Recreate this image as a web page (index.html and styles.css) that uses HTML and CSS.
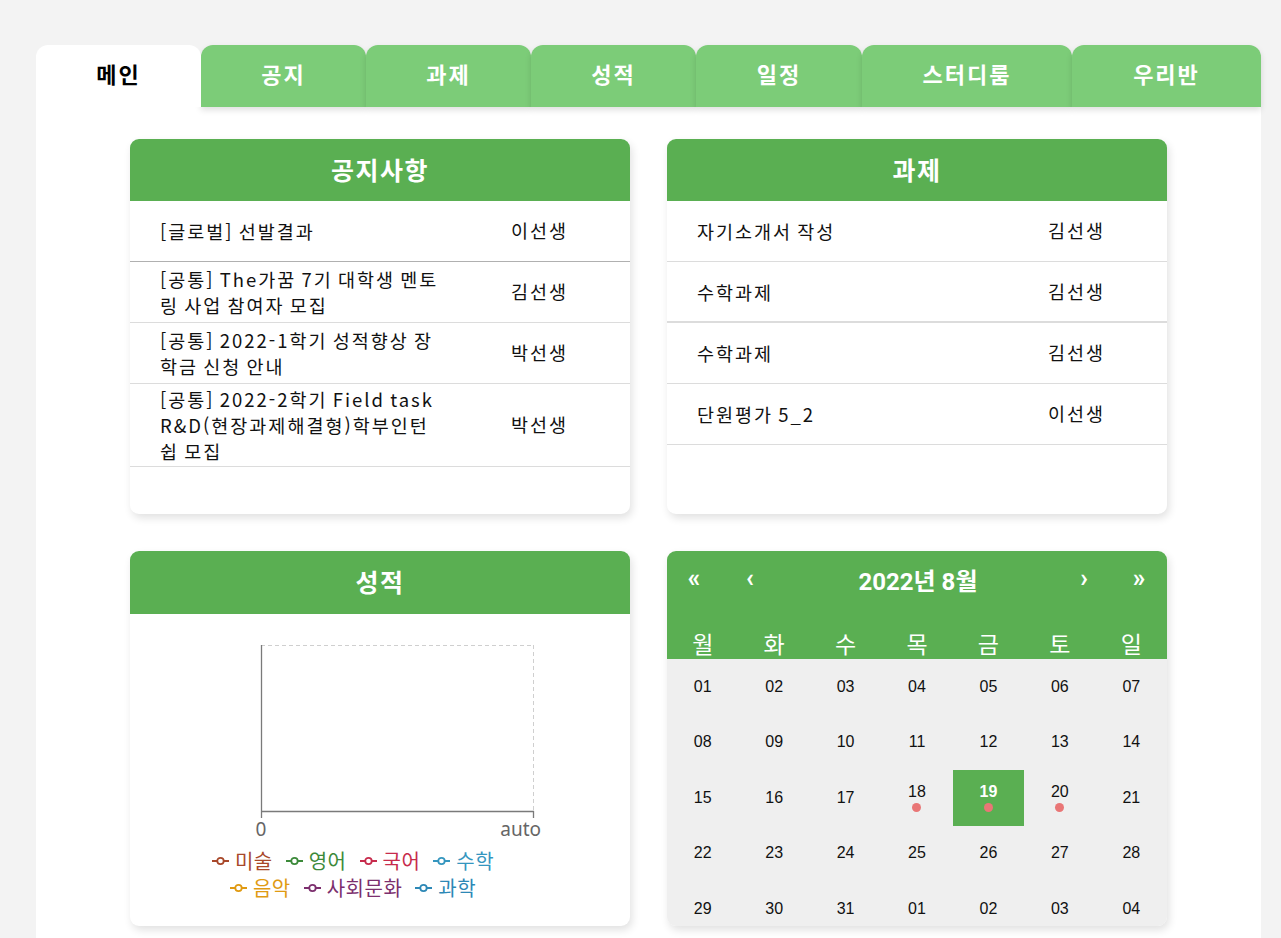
FILE: index.html
```html
<!DOCTYPE html>
<html lang="ko">
<head>
<meta charset="utf-8">
<title>메인</title>
<link rel="stylesheet" href="styles.css">
</head>
<body>
<div class="app">
  <nav class="tabs">
    <div class="tab active w165">메인</div>
    <div class="tab w165">공지</div>
    <div class="tab w165">과제</div>
    <div class="tab w165">성적</div>
    <div class="tab w166">일정</div>
    <div class="tab w210">스터디룸</div>
    <div class="tab w189">우리반</div>
  </nav>
  <main class="panel">
    <div class="grid">
      <section class="card">
        <header class="card-head">공지사항</header>
        <div class="list">
          <div class="row first"><div class="title">[글로벌] 선발결과</div><div class="author">이선생</div></div>
          <div class="row"><div class="title">[공통] The가꿈 7기 대학생 멘토링 사업 참여자 모집</div><div class="author">김선생</div></div>
          <div class="row"><div class="title">[공통] 2022-1학기 성적향상 장학금 신청 안내</div><div class="author">박선생</div></div>
          <div class="row"><div class="title">[공통] 2022-2학기 Field task R&amp;D(현장과제해결형)학부인턴쉽 모집</div><div class="author">박선생</div></div>
        </div>
      </section>
      <section class="card">
        <header class="card-head">과제</header>
        <div class="list">
          <div class="row"><div class="title">자기소개서 작성</div><div class="author">김선생</div></div>
          <div class="row thick"><div class="title">수학과제</div><div class="author">김선생</div></div>
          <div class="row"><div class="title">수학과제</div><div class="author">김선생</div></div>
          <div class="row"><div class="title">단원평가 5_2</div><div class="author">이선생</div></div>
        </div>
      </section>
      <section class="card">
        <header class="card-head tall">성적</header>
        <div class="chart-body">
          <svg class="chart" width="500" height="230" viewBox="0 0 500 230">
            <line x1="131" y1="31.5" x2="403" y2="31.5" stroke="#cfcfcf" stroke-width="1" stroke-dasharray="4 3"/>
            <line x1="403.5" y1="31" x2="403.5" y2="197" stroke="#cfcfcf" stroke-width="1" stroke-dasharray="4 3"/>
            <line x1="131.5" y1="31" x2="131.5" y2="204" stroke="#7a7a7a" stroke-width="1.3"/>
            <line x1="131" y1="197.5" x2="404" y2="197.5" stroke="#7a7a7a" stroke-width="1.3"/>
            <line x1="403.5" y1="197" x2="403.5" y2="204" stroke="#7a7a7a" stroke-width="1.3"/>
            <text x="131" y="222" text-anchor="middle" class="axis-label">0</text>
            <text x="411" y="222" text-anchor="end" class="axis-label">auto</text>
          </svg>
          <ul class="legend">
            <li style="color:#a8482a"><svg width="17" height="10" viewBox="0 0 17 10"><line x1="0" y1="5" x2="17" y2="5" stroke="currentColor" stroke-width="2"/><circle cx="8.5" cy="5" r="3.2" fill="#fff" stroke="currentColor" stroke-width="1.8"/></svg>미술</li>
            <li style="color:#3c8a3a"><svg width="17" height="10" viewBox="0 0 17 10"><line x1="0" y1="5" x2="17" y2="5" stroke="currentColor" stroke-width="2"/><circle cx="8.5" cy="5" r="3.2" fill="#fff" stroke="currentColor" stroke-width="1.8"/></svg>영어</li>
            <li style="color:#c72b4c"><svg width="17" height="10" viewBox="0 0 17 10"><line x1="0" y1="5" x2="17" y2="5" stroke="currentColor" stroke-width="2"/><circle cx="8.5" cy="5" r="3.2" fill="#fff" stroke="currentColor" stroke-width="1.8"/></svg>국어</li>
            <li style="color:#3596bf"><svg width="17" height="10" viewBox="0 0 17 10"><line x1="0" y1="5" x2="17" y2="5" stroke="currentColor" stroke-width="2"/><circle cx="8.5" cy="5" r="3.2" fill="#fff" stroke="currentColor" stroke-width="1.8"/></svg>수학</li>
            <li style="color:#e09a12"><svg width="17" height="10" viewBox="0 0 17 10"><line x1="0" y1="5" x2="17" y2="5" stroke="currentColor" stroke-width="2"/><circle cx="8.5" cy="5" r="3.2" fill="#fff" stroke="currentColor" stroke-width="1.8"/></svg>음악</li>
            <li style="color:#7c2f6e"><svg width="17" height="10" viewBox="0 0 17 10"><line x1="0" y1="5" x2="17" y2="5" stroke="currentColor" stroke-width="2"/><circle cx="8.5" cy="5" r="3.2" fill="#fff" stroke="currentColor" stroke-width="1.8"/></svg>사회문화</li>
            <li style="color:#2d88b6"><svg width="17" height="10" viewBox="0 0 17 10"><line x1="0" y1="5" x2="17" y2="5" stroke="currentColor" stroke-width="2"/><circle cx="8.5" cy="5" r="3.2" fill="#fff" stroke="currentColor" stroke-width="1.8"/></svg>과학</li>
          </ul>
        </div>
      </section>
      <section class="card">
        <header class="cal-head">
          <div class="cal-nav">
            <span class="nav-btn">«</span>
            <span class="nav-btn">‹</span>
            <span class="cal-title">2022년 8월</span>
            <span class="nav-btn">›</span>
            <span class="nav-btn">»</span>
          </div>
          <div class="weekdays">
            <span>월</span><span>화</span><span>수</span><span>목</span><span>금</span><span>토</span><span>일</span>
          </div>
        </header>
        <div class="days">
          <div class="day">01</div><div class="day">02</div><div class="day">03</div><div class="day">04</div><div class="day">05</div><div class="day">06</div><div class="day">07</div>
          <div class="day">08</div><div class="day">09</div><div class="day">10</div><div class="day">11</div><div class="day">12</div><div class="day">13</div><div class="day">14</div>
          <div class="day">15</div><div class="day">16</div><div class="day">17</div>
          <div class="day"><span>18</span><i class="dot"></i></div>
          <div class="day today"><span>19</span><i class="dot"></i></div>
          <div class="day"><span>20</span><i class="dot"></i></div>
          <div class="day">21</div>
          <div class="day">22</div><div class="day">23</div><div class="day">24</div><div class="day">25</div><div class="day">26</div><div class="day">27</div><div class="day">28</div>
          <div class="day">29</div><div class="day">30</div><div class="day">31</div><div class="day">01</div><div class="day">02</div><div class="day">03</div><div class="day">04</div>
        </div>
      </section>
    </div>
  </main>
</div>
</body>
</html>
```
FILE: styles.css
```css
* { box-sizing: border-box; }
html, body { margin: 0; }
body {
  background: #f3f3f3;
  font-family: "Noto Sans CJK KR", "Noto Sans", sans-serif;
  color: #111;
  padding: 45px 20px 0 36px;
  overflow: hidden;
  height: 938px;
}
.app { width: 1225px; }

.tabs { display: flex; height: 62px; }
.tab {
  flex: none;
  height: 62px;
  display: flex;
  align-items: center;
  justify-content: center;
  background: #7ccc78;
  color: #fff;
  font-weight: 700;
  font-size: 22px;
  letter-spacing: 2px;
  border-radius: 12px 12px 0 0;
  box-shadow: 0 3px 6px rgba(0,0,0,0.13);
  position: relative;
  padding-bottom: 6px;
}
.tab.active { background: #fff; color: #000; box-shadow: none; z-index: 2; }
.w165 { width: 165px; }
.w166 { width: 166px; }
.w210 { width: 210px; }
.w189 { width: 189px; }

.panel {
  background: #fff;
  padding: 32px 94px 40px;
  min-height: 900px;
}
.grid {
  display: grid;
  grid-template-columns: 500px 500px;
  column-gap: 37px;
  row-gap: 37px;
}
.card {
  height: 375px;
  background: #fff;
  border-radius: 9px;
  overflow: hidden;
  box-shadow: 2px 4px 8px rgba(0,0,0,0.12);
}
.card-head {
  height: 62px;
  background: #5aaf52;
  color: #fff;
  font-weight: 700;
  font-size: 25px;
  letter-spacing: 1.5px;
  display: flex;
  align-items: center;
  justify-content: center;
  padding-bottom: 3px;
}
.card-head.tall { height: 63px; }

.row {
  display: grid;
  grid-template-columns: 351px 1fr;
  align-items: center;
  min-height: 61px;
  padding: 2px 0 2px 30px;
  border-bottom: 1px solid #dcdcdc;
  font-size: 18.5px;
  letter-spacing: 2px;
  word-spacing: -2px;
  line-height: 26px;
}
.row.first { border-bottom: 1.5px solid #b0b0b0; }
.row.thick { border-bottom: 2px solid #dcdcdc; }
.title { max-width: 283px; }
.author { padding-bottom: 2px; }

.chart { display: block; }
.axis-label { font-family: "Noto Sans", sans-serif; font-size: 19px; fill: #666; }
.legend {
  list-style: none;
  margin: 3px 0 0 63px;
  padding: 0;
  width: 320px;
  display: flex;
  flex-wrap: wrap;
  justify-content: center;
  column-gap: 13px;
  font-size: 20px;
  letter-spacing: 0.5px;
  line-height: 27px;
}
.legend li { display: flex; align-items: center; gap: 6px; }
.legend svg { display: block; }

.cal-head {
  background: #5aaf52;
  color: #fff;
  height: 108px;
}
.cal-nav {
  height: 56px;
  display: grid;
  grid-template-columns: 54px 58px 1fr 54px 56px;
  align-items: center;
  font-family: Roboto, "Noto Sans CJK KR", sans-serif;
  font-weight: 700;
}
.nav-btn { font-size: 25px; text-align: center; padding-bottom: 2px; }
.cal-title { text-align: center; font-size: 24px; }
.weekdays {
  display: grid;
  grid-template-columns: repeat(7, 1fr);
  height: 52px;
  padding-top: 20px;
  font-size: 23px;
  line-height: 32px;
  text-align: center;
}
.days {
  background: #efefef;
  display: grid;
  grid-template-columns: repeat(7, 1fr);
  grid-auto-rows: 55.5px;
  font-family: "Liberation Sans", Arial, sans-serif;
  font-size: 16px;
  color: #111;
}
.day {
  display: flex;
  flex-direction: column;
  align-items: center;
  justify-content: center;
  line-height: 18px;
}
.day.today { background: #5aaf52; color: #fff; font-weight: 700; }
.dot {
  display: block;
  width: 9px;
  height: 9px;
  border-radius: 50%;
  background: #e97676;
  margin-top: 2px;
}
```
